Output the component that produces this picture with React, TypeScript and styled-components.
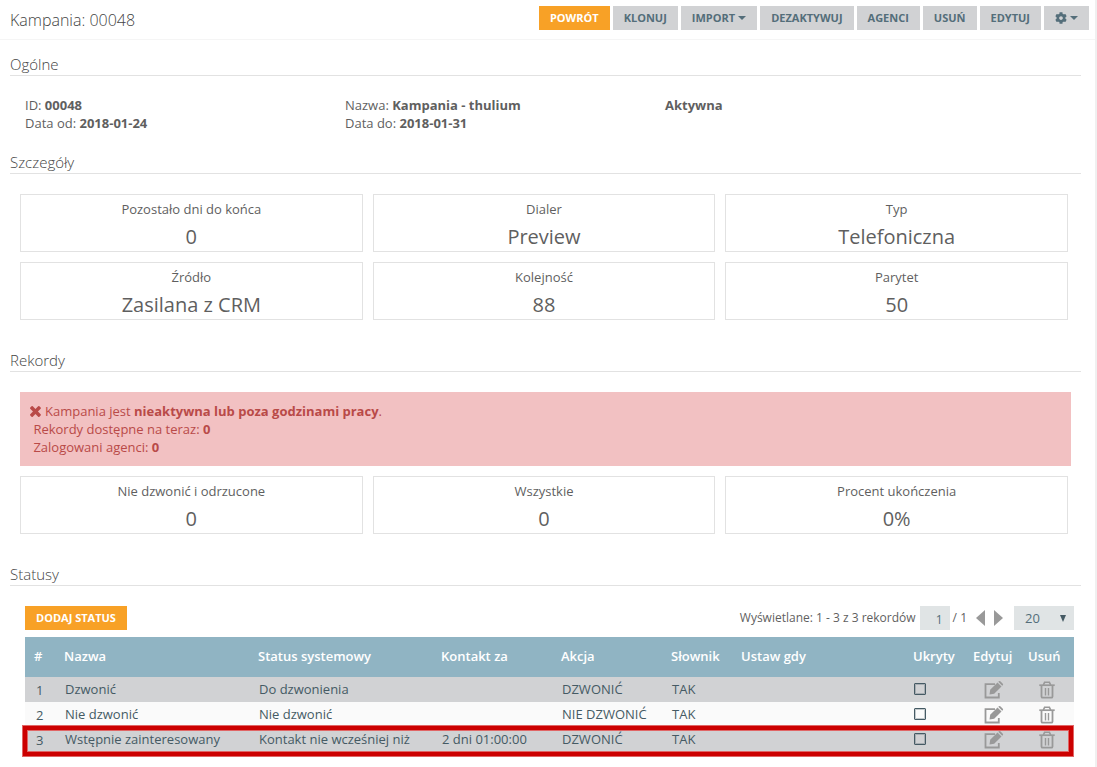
import React from "react";
import styled, { createGlobalStyle, css } from "styled-components";
import { FaCog } from "react-icons/fa";

const Global = createGlobalStyle`
  * { box-sizing: border-box; }
  body {
    margin: 0;
    background: #f0f0f0;
    color: #5f5f5f;
    font: 13px/18px "Open Sans", "Noto Sans", sans-serif;
  }
`;

const Page = styled.main`
  min-height: 100vh;
  margin-right: 2px;
  padding-bottom: 8px;
  background: #fff;
`;

const Header = styled.header`
  display: flex;
  align-items: center;
  justify-content: space-between;
  height: 40px;
  margin-bottom: 14px;
  padding: 0 6px 4px 10px;
  border-bottom: 1px solid #f5f5f5;
`;

const Title = styled.h1`
  margin: 4px 0 0;
  font-size: 16px;
  line-height: 24px;
  font-weight: 300;
  color: #444;
`;

const Actions = styled.div`
  display: flex;
  gap: 3px;
`;

const Button = styled.button<{ $primary?: boolean }>`
  display: inline-flex;
  align-items: center;
  gap: 3px;
  height: 24px;
  padding: 0 11px;
  border: 0;
  background: ${(p) => (p.$primary ? "#f8a126" : "#d1d2d4")};
  color: ${(p) => (p.$primary ? "#fff" : "#546e7a")};
  font: 700 11px/16px "Open Sans", "Noto Sans", sans-serif;
  text-transform: uppercase;
  white-space: nowrap;
  cursor: pointer;
`;

const Section = styled.section<{ $space: number }>`
  padding: 0 14px 0 10px;
  margin-bottom: ${(p) => p.$space}px;
`;

const Heading = styled.h2`
  margin: 0;
  height: 22px;
  border-bottom: 1px solid #e2e2e2;
  font-size: 15px;
  line-height: 20px;
  font-weight: 300;
  color: #444;
`;

const Facts = styled.div`
  display: grid;
  grid-template-columns: 320px 320px 1fr;
  padding: 20px 15px 0;
`;

const Cards = styled.div`
  display: grid;
  grid-template-columns: repeat(3, 1fr);
  gap: 10px;
  padding: 0 13px 0 10px;
`;

const Card = styled.div`
  height: 58px;
  padding-top: 5px;
  border: 1px solid #e2e2e2;
  text-align: center;
`;

const CardValue = styled.div`
  margin-top: 3px;
  font-size: 20px;
  line-height: 32px;
`;

const DetailBody = styled.div`
  padding-top: 20px;
`;

const Alert = styled.div`
  margin: 0 10px 10px;
  padding: 10px;
  background: #f2c1c2;
  color: #b94a48;
`;

const CrossIcon = styled.svg`
  width: 11px;
  height: 11px;
  margin-right: 4px;
  vertical-align: -1px;
`;

const StatusBody = styled.div`
  padding: 20px 7px 0 15px;
`;

const Toolbar = styled.div`
  display: flex;
  align-items: center;
  justify-content: space-between;
  margin-bottom: 7px;
`;

const Pager = styled.div`
  display: flex;
  align-items: center;
  font-size: 12px;
  line-height: 20px;
`;

const field = css`
  height: 24px;
  border: 0;
  border-radius: 0;
  background: #e0e4e5;
  color: #546e7a;
`;

const PageInput = styled.input`
  ${field}
  width: 30px;
  margin: 0 3px 0 4px;
  padding: 2px 7px 0 0;
  text-align: right;
  font: 12px/18px "Open Sans", "Noto Sans", sans-serif;
`;

const ArrowButton = styled.button`
  display: flex;
  width: 9px;
  height: 16px;
  margin-left: 9px;
  padding: 0;
  border: 0;
  background: none;
  color: #999;
`;

const SelectBox = styled.div`
  display: grid;
  align-items: center;
  margin-left: 11px;

  & > * { grid-area: 1 / 1; }
  svg {
    justify-self: end;
    margin-right: 8px;
    pointer-events: none;
  }
`;

const Select = styled.select`
  ${field}
  width: 60px;
  padding: 0 11px;
  appearance: none;
  font: 13px/18px "Open Sans", "Noto Sans", sans-serif;
`;

const Table = styled.table`
  width: 100%;
  table-layout: fixed;
  border-collapse: collapse;
  color: #455a64;
`;

const Col = styled.col<{ $w?: number }>`
  width: ${(p) => (p.$w ? `${p.$w}px` : "auto")};
`;

const Th = styled.th`
  height: 40px;
  padding: 0 0 2px 9px;
  background: #90b4c3;
  color: #fff;
  font-weight: 600;
  text-align: left;
  white-space: nowrap;
`;

const Row = styled.tr<{ $marked?: boolean }>`
  background: #fafafa;
  &:nth-child(odd) { background: #d1d2d4; }

  ${(p) =>
    p.$marked &&
    css`
      position: relative;
      td:first-child::after {
        content: "";
        position: absolute;
        inset: -1px 1px -4px -2px;
        border: 4px solid #cc0000;
        box-shadow: 0 0 0 1px #e06666, inset 0 0 0 1px #e06666;
        pointer-events: none;
      }
    `}
`;

const Td = styled.td`
  height: 25px;
  padding: 0 0 2px 10px;
  white-space: nowrap;
`;

const IndexTd = styled(Td)`
  padding: 0 0 0 11px;
`;

const IconTd = styled(Td)`
  padding: 0 0 0 20px;
`;

const Check = styled.input`
  display: block;
  appearance: none;
  width: 12px;
  height: 12px;
  margin: 0;
  border: 1px solid #455a64;
  border-radius: 1px;
  box-shadow: inset 0 0 0 1px rgba(69, 90, 100, 0.3);
`;

const IconButton = styled.button`
  display: inline-flex;
  padding: 0;
  border: 0;
  background: none;
  color: #999;
  vertical-align: middle;
  cursor: pointer;
`;

const Caret = () => (
  <svg width="8" height="4" viewBox="0 0 8 4" aria-hidden="true">
    <path d="M0 0H8L4 4z" fill="currentColor" />
  </svg>
);

const EditIcon = () => (
  <svg width="20" height="18" viewBox="0 0 20 18" fill="none" aria-hidden="true">
    <path d="M11 3.2H1.500V16.500H14.800V12" stroke="currentColor" strokeWidth="1.8" />
    <path d="M5.500 13.500l.7-4.700 7.300-7.300 4 4-7.300 7.300z" fill="currentColor" />
    <path d="M14.300 .8l.6-.5q.7-.6 1.400 0l2.500 2.500q.6.700 0 1.400l-.6.600z" fill="currentColor" />
  </svg>
);

const TrashIcon = () => (
  <svg width="16" height="18" viewBox="0 0 16 18" fill="none" stroke="currentColor" aria-hidden="true">
    <path d="M.3 4.200h15.400" strokeWidth="1.700" />
    <path d="M4.300 4L5.600 1.300H10.400L11.700 4" strokeWidth="1.600" />
    <path d="M2.500 4.500V15.400Q2.500 16.700 3.700 16.700H12.300Q13.500 16.700 13.500 15.400V4.500" strokeWidth="1.800" />
    <path d="M6.500 7v7.500M9.500 7v7.500" strokeWidth="1.400" />
  </svg>
);

const headerButtons = ["Klonuj", "Import", "Dezaktywuj", "Agenci", "Usuń", "Edytuj"];

const details = [
  ["Pozostało dni do końca", "0"],
  ["Dialer", "Preview"],
  ["Typ", "Telefoniczna"],
  ["Źródło", "Zasilana z CRM"],
  ["Kolejność", "88"],
  ["Parytet", "50"],
];

const records = [
  ["Nie dzwonić i odrzucone", "0"],
  ["Wszystkie", "0"],
  ["Procent ukończenia", "0%"],
];

const columns: { label: string; width?: number }[] = [
  { label: "#", width: 30 },
  { label: "Nazwa", width: 194 },
  { label: "Status systemowy", width: 183 },
  { label: "Kontakt za", width: 120 },
  { label: "Akcja", width: 110 },
  { label: "Słownik", width: 70 },
  { label: "Ustaw gdy" },
  { label: "Ukryty", width: 60 },
  { label: "Edytuj", width: 55 },
  { label: "Usuń", width: 55 },
];

const statuses = [
  { name: "Dzwonić", system: "Do dzwonienia", after: "", action: "DZWONIĆ" },
  { name: "Nie dzwonić", system: "Nie dzwonić", after: "", action: "NIE DZWONIĆ" },
  {
    name: "Wstępnie zainteresowany",
    system: "Kontakt nie wcześniej niż",
    after: "2 dni 01:00:00",
    action: "DZWONIĆ",
    marked: true,
  },
];

const CardGrid = ({ items }: { items: string[][] }) => (
  <Cards>
    {items.map(([label, value]) => (
      <Card key={label}>
        <div>{label}</div>
        <CardValue>{value}</CardValue>
      </Card>
    ))}
  </Cards>
);

export default function App() {
  return (
    <>
      <Global />
      <Page>
        <Header>
          <Title>Kampania: 00048</Title>
          <Actions>
            <Button $primary>Powrót</Button>
            {headerButtons.map((label) => (
              <Button key={label}>
                {label}
                {label === "Import" && <Caret />}
              </Button>
            ))}
            <Button aria-label="Ustawienia">
              <FaCog size={12} />
              <Caret />
            </Button>
          </Actions>
        </Header>

        <Section $space={20}>
          <Heading>Ogólne</Heading>
          <Facts>
            <div>
              ID: <b>00048</b>
              <br />
              Data od: <b>2018-01-24</b>
            </div>
            <div>
              Nazwa: <b>Kampania - thulium</b>
              <br />
              Data do: <b>2018-01-31</b>
            </div>
            <div>
              <b>Aktywna</b>
            </div>
          </Facts>
        </Section>

        <Section $space={30}>
          <Heading>Szczegóły</Heading>
          <DetailBody>
            <CardGrid items={details} />
          </DetailBody>
        </Section>

        <Section $space={30}>
          <Heading>Rekordy</Heading>
          <DetailBody>
            <Alert role="alert">
              <div>
                <CrossIcon viewBox="300 360 1200 1200" aria-hidden="true">
                  <path
                    fill="currentColor"
                    d="M1490 1322q0 40-28 68l-136 136q-28 28-68 28t-68-28l-294-294-294 294q-28 28-68 28t-68-28l-136-136q-28-28-28-68t28-68l294-294-294-294q-28-28-28-68t28-68l136-136q28-28 68-28t68 28l294 294 294-294q28-28 68-28t68 28l136 136q28 28 28 68t-28 68l-294 294 294 294q28 28 28 68z"
                  />
                </CrossIcon>
                Kampania jest <b>nieaktywna lub poza godzinami pracy</b>.
              </div>
              <div>
                &nbsp;Rekordy dostępne na teraz: <b>0</b>
              </div>
              <div>
                &nbsp;Zalogowani agenci: <b>0</b>
              </div>
            </Alert>
            <CardGrid items={records} />
          </DetailBody>
        </Section>

        <Section $space={0}>
          <Heading>Statusy</Heading>
          <StatusBody>
            <Toolbar>
              <Button $primary>Dodaj status</Button>
              <Pager>
                <span>Wyświetlane: 1 - 3 z 3 rekordów</span>
                <PageInput aria-label="Strona" defaultValue="1" />
                <span>/ 1</span>
                <ArrowButton aria-label="Poprzednia strona">
                  <svg width="9" height="16" aria-hidden="true">
                    <path d="M9 0V16L0 8z" fill="currentColor" />
                  </svg>
                </ArrowButton>
                <ArrowButton aria-label="Następna strona">
                  <svg width="9" height="16" aria-hidden="true">
                    <path d="M0 0V16L9 8z" fill="currentColor" />
                  </svg>
                </ArrowButton>
                <SelectBox>
                  <Select aria-label="Liczba rekordów" defaultValue="20">
                    <option>20</option>
                    <option>50</option>
                  </Select>
                  <svg width="6" height="7" aria-hidden="true">
                    <path d="M0 0H6L3 7z" fill="#455a64" />
                  </svg>
                </SelectBox>
              </Pager>
            </Toolbar>
            <Table>
              <colgroup>
                {columns.map((c) => (
                  <Col key={c.label} $w={c.width} />
                ))}
              </colgroup>
              <thead>
                <tr>
                  {columns.map((c) => (
                    <Th key={c.label}>{c.label}</Th>
                  ))}
                </tr>
              </thead>
              <tbody>
                {statuses.map((s, i) => (
                  <Row key={s.name} $marked={s.marked}>
                    <IndexTd>{i + 1}</IndexTd>
                    <Td>{s.name}</Td>
                    <Td>{s.system}</Td>
                    <Td>{s.after}</Td>
                    <Td>{s.action}</Td>
                    <Td>TAK</Td>
                    <Td />
                    <Td>
                      <Check type="checkbox" aria-label={`Ukryty: ${s.name}`} />
                    </Td>
                    <IconTd>
                      <IconButton aria-label={`Edytuj: ${s.name}`}>
                        <EditIcon />
                      </IconButton>
                    </IconTd>
                    <IconTd>
                      <IconButton aria-label={`Usuń: ${s.name}`}>
                        <TrashIcon />
                      </IconButton>
                    </IconTd>
                  </Row>
                ))}
              </tbody>
            </Table>
          </StatusBody>
        </Section>
      </Page>
    </>
  );
}
